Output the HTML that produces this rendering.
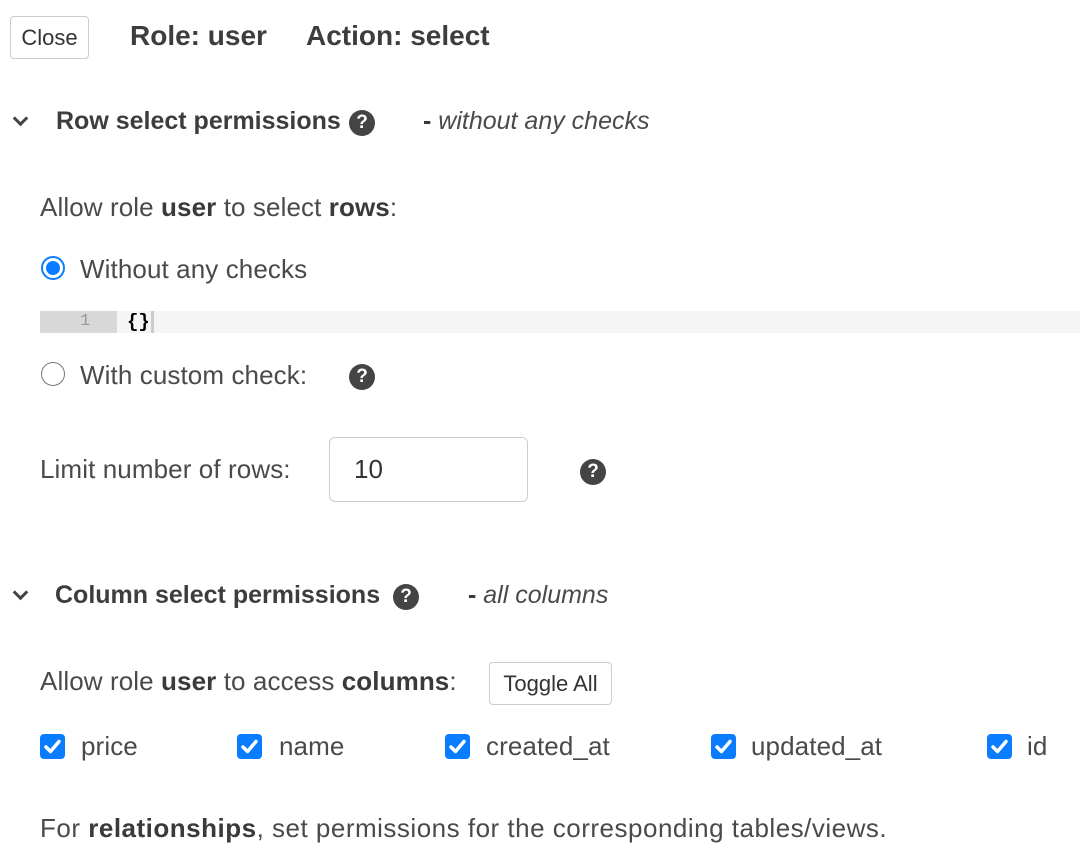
<!DOCTYPE html>
<html><head><meta charset="utf-8"><style>
body{margin:0;width:1080px;height:862px;background:#fff;font-family:"Liberation Sans",sans-serif;color:#4a4a4a;position:relative;overflow:hidden}
.a{position:absolute;white-space:nowrap;line-height:30px}
.t{font-size:26px;letter-spacing:0.1px}
.h{font-size:25px;font-weight:bold;color:#3d3d3d}
b{color:#3a3a3a}
.q{position:absolute;width:26px;height:26px;border-radius:50%;background:#444;color:#fff;font-weight:bold;font-size:19px;line-height:26px;text-align:center}
.chev{position:absolute;width:8px;height:8px;border-right:3px solid #444;border-bottom:3px solid #444;transform:rotate(45deg)}
</style></head><body>
<div class="a" style="left:10px;top:16px;width:77px;height:41px;border:1.5px solid #ccc;border-radius:4px;font-size:22px;line-height:41px;text-align:center;color:#333">Close</div>
<div class="a h" style="left:130px;top:21px;font-size:28px">Role: user</div>
<div class="a h" style="left:306px;top:21px;font-size:28px">Action: select</div>

<div class="chev" style="left:15px;top:113px"></div>
<div class="a h" style="left:56px;top:106px">Row select permissions</div>
<div class="q" style="left:349px;top:110px">?</div>
<div class="a t" style="left:423px;top:106px;font-style:italic;font-size:25px;letter-spacing:0"><b style="font-style:normal">-</b> without any checks</div>

<div class="a t" style="left:40px;top:192px">Allow role <b>user</b> to select <b>rows</b>:</div>
<div style="position:absolute;left:41px;top:256px;width:20px;height:20px;border:2px solid #0a7cff;border-radius:50%"></div>
<div style="position:absolute;left:46px;top:261px;width:14px;height:14px;background:#0a7cff;border-radius:50%"></div>
<div class="a t" style="left:80px;top:254px">Without any checks</div>

<div style="position:absolute;left:40px;top:311px;width:1040px;height:22px;background:#f5f5f5"></div>
<div style="position:absolute;left:40px;top:311px;width:77px;height:22px;background:#d8d8d8"></div>
<div class="a" style="left:80px;top:311px;line-height:22px;font-size:17px;color:#999;font-family:'Liberation Mono',monospace">1</div>
<div class="a" style="left:127px;top:311px;line-height:22px;font-size:19px;color:#000;font-weight:bold;font-family:'Liberation Mono',monospace">{}</div>
<div style="position:absolute;left:151px;top:311px;width:3px;height:22px;background:#ccc"></div>

<div style="position:absolute;left:41px;top:362px;width:22px;height:22px;border:1.5px solid #777;border-radius:50%"></div>
<div class="a t" style="left:80px;top:360px">With custom check:</div>
<div class="q" style="left:349px;top:364px">?</div>

<div class="a t" style="left:40px;top:454px">Limit number of rows:</div>
<div style="position:absolute;left:329px;top:437px;width:197px;height:63px;border:1.5px solid #ccc;border-radius:6px"></div>
<div class="a t" style="left:354px;top:454px;color:#333">10</div>
<div class="q" style="left:580px;top:459px">?</div>

<div class="chev" style="left:15px;top:587px"></div>
<div class="a h" style="left:55px;top:580px">Column select permissions</div>
<div class="q" style="left:393px;top:584px">?</div>
<div class="a t" style="left:468px;top:580px;font-style:italic;font-size:25px;letter-spacing:0"><b style="font-style:normal">-</b> all columns</div>

<div class="a t" style="left:40px;top:666px">Allow role <b>user</b> to access <b>columns</b>:</div>
<div class="a" style="left:489px;top:662px;width:121px;height:41px;border:1.5px solid #ccc;border-radius:4px;font-size:22px;line-height:41px;text-align:center;color:#333">Toggle All</div>

<svg width="0" height="0" style="position:absolute"><defs><symbol id="ck" viewBox="0 0 25 25"><rect width="25" height="25" rx="4" fill="#0a7cff"/><path d="M6 13l4.5 4.5L19 7.5" stroke="#fff" stroke-width="3.5" fill="none" stroke-linecap="round" stroke-linejoin="round"/></symbol></defs></svg>
<svg style="position:absolute;left:40px;top:734px" width="25" height="25"><use href="#ck"/></svg>
<div class="a t" style="left:81px;top:731px">price</div>
<svg style="position:absolute;left:237px;top:734px" width="25" height="25"><use href="#ck"/></svg>
<div class="a t" style="left:279px;top:731px">name</div>
<svg style="position:absolute;left:445px;top:734px" width="25" height="25"><use href="#ck"/></svg>
<div class="a t" style="left:486px;top:731px">created_at</div>
<svg style="position:absolute;left:711px;top:734px" width="25" height="25"><use href="#ck"/></svg>
<div class="a t" style="left:751px;top:731px">updated_at</div>
<svg style="position:absolute;left:987px;top:734px" width="25" height="25"><use href="#ck"/></svg>
<div class="a t" style="left:1027px;top:731px">id</div>

<div class="a t" style="left:40px;top:813px;letter-spacing:0.5px">For <b>relationships</b>, set permissions for the corresponding tables/views.</div>
</body></html>
